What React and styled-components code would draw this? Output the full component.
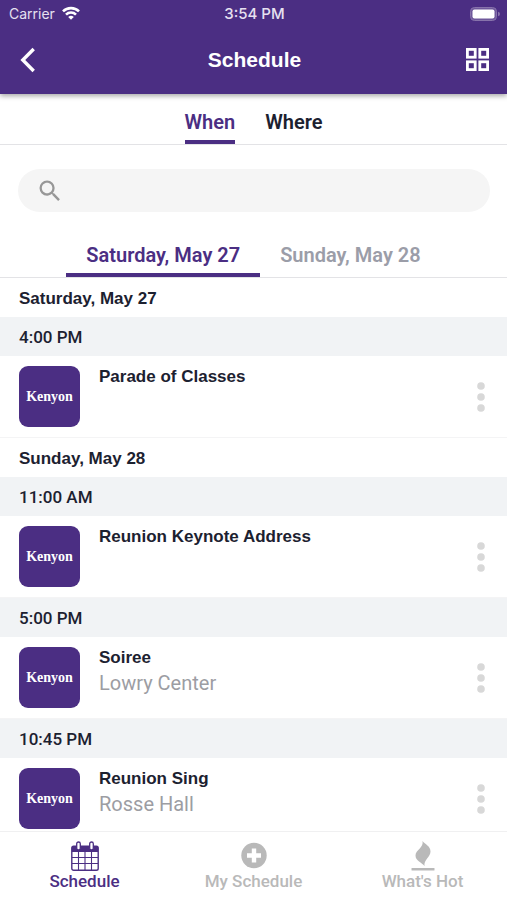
import React, {useState} from 'react';
import styled, {createGlobalStyle} from 'styled-components';
import {MdSearch} from 'react-icons/md';

const purple = '#4b2e83';

const GlobalStyle = createGlobalStyle`
  * {
    box-sizing: border-box;
  }

  body {
    margin: 0;
    background-color: white;
    color: #1c2130;
    font-family: Roboto, sans-serif;
  }

  button {
    padding: 0;
    border: none;
    background: none;
    color: inherit;
    font: inherit;
    cursor: pointer;
  }

  h1, h2, h3, p {
    margin: 0;
  }

  svg {
    display: block;
  }
`;

const Screen = styled.div`
  display: flex;
  flex-direction: column;
  height: 100vh;
`;

const Header = styled.header`
  position: relative;
  background-color: ${purple};
  color: white;
  box-shadow: 0 2px 5px rgba(0, 0, 0, 0.35);
`;

const StatusBar = styled.div`
  display: grid;
  grid-template-columns: 1fr auto 1fr;
  align-items: center;
  height: 27px;
  padding: 0 7px 0 9px;
  color: #e6e0f0;
  font-family: Inter, sans-serif;
  font-size: 14px;
  line-height: 27px;
`;

const Carrier = styled.div`
  display: flex;
  align-items: center;
  gap: 7px;
`;

const Clock = styled.div`
  font-size: 15px;
  font-weight: 500;
`;

const Battery = styled.div`
  justify-self: end;
`;

const TitleBar = styled.div`
  display: grid;
  grid-template-columns: 1fr auto 1fr;
  align-items: center;
  height: 67px;
  padding: 0 18px 2px 20px;
`;

const Title = styled.h1`
  font-family: "Liberation Sans", sans-serif;
  font-size: 21px;
  font-weight: bold;
`;

const HeaderButton = styled.button`
  justify-self: ${props => props.$end ? 'end' : 'start'};
`;

const Tabs = styled.nav`
  display: flex;
  justify-content: center;
  gap: 30px;
  height: 51px;
  border-bottom: 1px solid #e3e3e6;
`;

const Tab = styled.button`
  && {
    padding: ${props => props.$wide ? '4px 20px 0' : '9px 0 0'};
    border-bottom: 4px solid ${props => props.$active ? purple : 'transparent'};
    color: ${props => props.$active ? purple : props.$wide ? '#9b9da8' : '#1c2130'};
    font-size: 20px;
    font-weight: 600;
  }
`;

const DateTabs = styled(Tabs)`
  gap: 0;
  height: 46px;
`;

const SearchBox = styled.label`
  display: flex;
  align-items: center;
  gap: 10px;
  height: 43px;
  margin: 24px 17px 20px 18px;
  padding: 0 18px;
  border-radius: 22px;
  background-color: #f5f5f5;
  color: #979797;
`;

const SearchInput = styled.input`
  flex-grow: 1;
  min-width: 0;
  border: none;
  outline: none;
  background: none;
  font-family: Roboto, sans-serif;
  font-size: 17px;
`;

const List = styled.main`
  flex: 1;
  min-height: 0;
  overflow-y: auto;
  scrollbar-width: none;
`;

const DayHeading = styled.h2`
  padding: 2px 19px 0;
  font-family: "Liberation Sans", sans-serif;
  font-size: 17px;
  font-weight: bold;
  line-height: 37px;
`;

const TimeHeading = styled.h3`
  padding: 2px 19px 0;
  background-color: #f1f3f5;
  font-size: 17px;
  font-weight: 500;
  line-height: 37px;
`;

const Event = styled.article`
  display: flex;
  align-items: flex-start;
  height: 82px;
  padding: 10px 14px 10px 19px;
  border-bottom: 1px solid #f4f4f5;
`;

const Logo = styled.div`
  width: 61px;
  margin-right: 19px;
  border-radius: 9px;
  background-color: ${purple};
  color: white;
  font-family: "Liberation Serif", serif;
  font-size: 14px;
  font-weight: bold;
  line-height: 61px;
  text-align: center;
`;

const EventText = styled.div`
  flex-grow: 1;
`;

const EventName = styled.div`
  font-family: "Liberation Sans", sans-serif;
  font-size: 17px;
  font-weight: bold;
  line-height: 21px;
`;

const EventPlace = styled.p`
  margin-top: 2px;
  color: #9c9da3;
  font-size: 20px;
  line-height: 27px;
`;

const MenuButton = styled.button`
  align-self: center;
  width: 24px;
`;

const TabBar = styled.nav`
  display: flex;
  height: 69px;
  border-top: 1px solid #f0f0f1;
`;

const TabBarButton = styled.button`
  && {
    flex: 1;
    display: flex;
    flex-direction: column;
    align-items: center;
    padding-top: 9px;
    color: ${props => props.$active ? purple : '#b9b9b9'};
    font-size: 17px;
    font-weight: 500;
    line-height: 20px;
  }
`;

const WifiIcon = () => (
  <svg width="18" height="16" viewBox="0 0 18 16" fill="none" stroke="white" strokeWidth="2.6">
    <path d="M1 5.4a11.3 11.3 0 0 1 16 0" />
    <path d="M4 8.6a7.1 7.1 0 0 1 10 0" />
    <path d="M9 13.8l-2.8-2.8a4 4 0 0 1 5.6 0z" fill="white" stroke="none" />
  </svg>
);

const BatteryIcon = () => (
  <svg width="30" height="14" viewBox="0 0 30 14">
    <rect x="0.5" y="0.5" width="26" height="13" rx="4" fill="#6f589b" stroke="#8773ab" />
    <rect x="2.5" y="2.5" width="22" height="9" rx="2" fill="white" />
    <path d="M28 4.7q2 .6 2 2.3t-2 2.3z" fill="#8773ab" />
  </svg>
);

const BackIcon = () => (
  <svg width="16" height="26" viewBox="0 0 16 26" fill="none" stroke="white" strokeWidth="3.4">
    <path d="M13.7 2 2.8 13l10.9 11" />
  </svg>
);

const GridIcon = () => (
  <svg width="23" height="23" viewBox="0 0 23 23" fill="none" stroke="white" strokeWidth="2.8">
    <rect x="1.4" y="1.4" width="7.8" height="7.8" />
    <rect x="13.8" y="1.4" width="7.8" height="7.8" />
    <rect x="1.4" y="13.8" width="7.8" height="7.8" />
    <rect x="13.8" y="13.8" width="7.8" height="7.8" />
  </svg>
);

const DotsIcon = () => (
  <svg width="24" height="32" viewBox="0 0 24 32" fill="#d8d8d8">
    <circle cx="12" cy="5" r="3.8" />
    <circle cx="12" cy="16" r="3.8" />
    <circle cx="12" cy="27" r="3.8" />
  </svg>
);

const CalendarIcon = () => (
  <svg width="28" height="30" viewBox="0 0 28 30" fill="none" stroke={purple}>
    <rect x="0.8" y="5.2" width="26.4" height="24" rx="1.8" strokeWidth="1.4" />
    <path d="M1 5.5h26V11H1z" fill={purple} stroke="none" />
    <path d="M1 16.5h26M1 22.5h26M7.5 11v18M14 11v18M20.5 11v18" strokeWidth="1.1" />
    <rect x="5.7" y="1" width="3.6" height="8" rx="1.8" fill="white" strokeWidth="1.3" />
    <rect x="18.7" y="1" width="3.6" height="8" rx="1.8" fill="white" strokeWidth="1.3" />
  </svg>
);

const PlusIcon = () => (
  <svg width="28" height="30" viewBox="0 0 28 30">
    <circle cx="14" cy="14.5" r="12.7" fill="#b9b9b9" />
    <path d="M14 7.5v14M7 14.5h14" stroke="white" strokeWidth="4.4" />
  </svg>
);

const FlameIcon = () => (
  <svg width="28" height="30" viewBox="0 0 28 30" fill="#b9b9b9">
    <path d="M13.5 0C16 3.2 21.5 5 21.5 10.5c0 5.5-7 8.500-6 14.500C13 21.500 6.500 20 6.500 14.500 6.500 9 15 6.500 13.500 0z" />
    <rect x="2.5" y="27" width="23" height="2.4" rx="0.5" />
  </svg>
);

const days = [
  {
    name: 'Saturday, May 27',
    events: [{time: '4:00 PM', name: 'Parade of Classes'}],
  },
  {
    name: 'Sunday, May 28',
    events: [
      {time: '11:00 AM', name: 'Reunion Keynote Address'},
      {time: '5:00 PM', name: 'Soiree', place: 'Lowry Center'},
      {time: '10:45 PM', name: 'Reunion Sing', place: 'Rosse Hall'},
    ],
  },
];

const views = ['When', 'Where'];

const sections = [
  {name: 'Schedule', Icon: CalendarIcon},
  {name: 'My Schedule', Icon: PlusIcon},
  {name: "What's Hot", Icon: FlameIcon},
];

export default function App() {
  const [view, setView] = useState('When');
  const [day, setDay] = useState(days[0].name);
  const [section, setSection] = useState('Schedule');

  return (
    <Screen>
      <GlobalStyle />
      <Header>
        <StatusBar>
          <Carrier>Carrier <WifiIcon /></Carrier>
          <Clock>3:54 PM</Clock>
          <Battery><BatteryIcon /></Battery>
        </StatusBar>
        <TitleBar>
          <HeaderButton aria-label="Back"><BackIcon /></HeaderButton>
          <Title>Schedule</Title>
          <HeaderButton $end aria-label="Menu"><GridIcon /></HeaderButton>
        </TitleBar>
      </Header>
      <Tabs>
        {views.map(name => (
          <Tab key={name} $active={name === view} onClick={() => setView(name)}>{name}</Tab>
        ))}
      </Tabs>
      <SearchBox>
        <MdSearch size={28} />
        <SearchInput type="text" aria-label="Search" />
      </SearchBox>
      <DateTabs>
        {days.map(({name}) => (
          <Tab key={name} $wide $active={name === day} onClick={() => setDay(name)}>{name}</Tab>
        ))}
      </DateTabs>
      <List>
        {days.map(({name, events}) => (
          <section key={name}>
            <DayHeading>{name}</DayHeading>
            {events.map(event => (
              <React.Fragment key={event.time}>
                <TimeHeading>{event.time}</TimeHeading>
                <Event>
                  <Logo>Kenyon</Logo>
                  <EventText>
                    <EventName>{event.name}</EventName>
                    {event.place && <EventPlace>{event.place}</EventPlace>}
                  </EventText>
                  <MenuButton aria-label={`Options for ${event.name}`}><DotsIcon /></MenuButton>
                </Event>
              </React.Fragment>
            ))}
          </section>
        ))}
      </List>
      <TabBar>
        {sections.map(({name, Icon}) => (
          <TabBarButton key={name} $active={name === section} onClick={() => setSection(name)}>
            <Icon />
            {name}
          </TabBarButton>
        ))}
      </TabBar>
    </Screen>
  );
}
